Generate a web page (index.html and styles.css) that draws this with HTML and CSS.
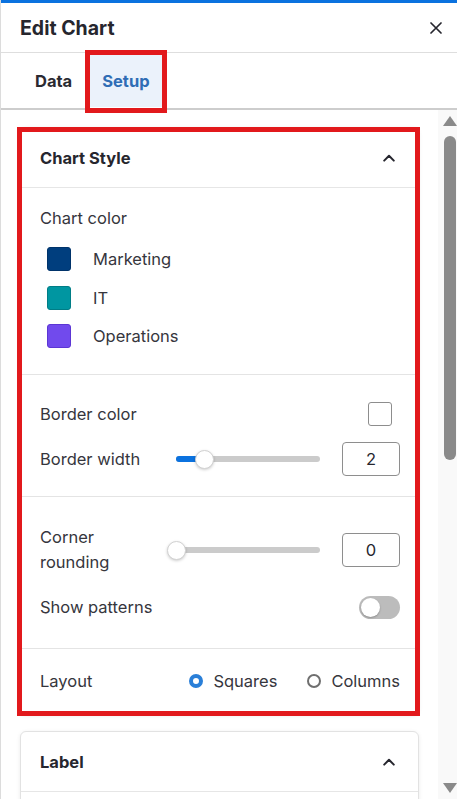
FILE: index.html
```html
<!DOCTYPE html>
<html lang="en">
<head>
<meta charset="utf-8">
<title>Edit Chart</title>
<link rel="stylesheet" href="styles.css">
</head>
<body>
<div class="panel">
  <div class="topbar"></div>
  <header class="head">
    <h1 class="title">Edit Chart</h1>
    <button class="close" aria-label="Close">
      <svg width="12" height="12" viewBox="0 0 12 12"><path d="M1 1L11 11M11 1L1 11" stroke="#26262e" stroke-width="1.7" stroke-linecap="round" fill="none"/></svg>
    </button>
  </header>
  <nav class="tabs">
    <span class="tab">Data</span>
    <span class="tab active annot-tab">Setup</span>
  </nav>
  <div class="body">
    <div class="scroll">
      <section class="card annot-card">
        <div class="card-head">
          <span class="card-title">Chart Style</span>
          <svg class="chev" width="12" height="8" viewBox="0 0 12 8"><path d="M1.2 6.6L6 1.8L10.8 6.6" stroke="#26262e" stroke-width="2" fill="none" stroke-linecap="round" stroke-linejoin="round"/></svg>
        </div>
        <div class="sec sec-colors">
          <div class="label">Chart color</div>
          <ul class="series">
            <li class="series-row"><span class="sw sw-mkt"></span><span class="label">Marketing</span></li>
            <li class="series-row"><span class="sw sw-it"></span><span class="label">IT</span></li>
            <li class="series-row"><span class="sw sw-ops"></span><span class="label">Operations</span></li>
          </ul>
        </div>
        <div class="sec sec-border">
          <div class="row">
            <span class="label">Border color</span>
            <span class="color-box"></span>
          </div>
          <div class="slider-row">
            <span class="label">Border width</span>
            <div class="slider">
              <div class="fill" style="width:20%"></div>
              <div class="thumb" style="left:20%"></div>
            </div>
            <div class="num">2</div>
          </div>
        </div>
        <div class="sec sec-corner">
          <div class="slider-row tall">
            <span class="label">Corner<br>rounding</span>
            <div class="slider">
              <div class="fill" style="width:0%"></div>
              <div class="thumb" style="left:0%"></div>
            </div>
            <div class="num">0</div>
          </div>
          <div class="row">
            <span class="label">Show patterns</span>
            <span class="toggle"><span class="knob"></span></span>
          </div>
        </div>
        <div class="sec sec-layout">
          <div class="row">
            <span class="label">Layout</span>
            <div class="radios">
              <span class="radio-item"><span class="radio on"></span><span class="label">Squares</span></span>
              <span class="radio-item"><span class="radio"></span><span class="label">Columns</span></span>
            </div>
          </div>
        </div>
      </section>
      <section class="card">
        <div class="card-head">
          <span class="card-title">Label</span>
          <svg class="chev" width="12" height="8" viewBox="0 0 12 8"><path d="M1.2 6.6L6 1.8L10.8 6.6" stroke="#26262e" stroke-width="2" fill="none" stroke-linecap="round" stroke-linejoin="round"/></svg>
        </div>
        <div class="sec sec-empty"></div>
      </section>
    </div>
    <div class="scrollbar">
      <span class="arrow up"></span>
      <div class="sb-track"><div class="sb-thumb"></div></div>
      <span class="arrow down"></span>
    </div>
  </div>
</div>
</body>
</html>
```

FILE: styles.css
```css
* { box-sizing: border-box; }
html, body { margin: 0; padding: 0; }
body {
  width: 457px;
  height: 799px;
  overflow: hidden;
  background: #fff;
  font-family: Inter, "Noto Sans", "Liberation Sans", sans-serif;
  color: #2c2c33;
}
.panel {
  height: 799px;
  display: flex;
  flex-direction: column;
  border-left: 1px solid #dcdcdc;
}
.topbar { height: 3px; background: #0b72df; flex: none; }
.head {
  height: 50px;
  flex: none;
  display: flex;
  align-items: center;
  justify-content: space-between;
  padding: 0 15px 0 19px;
  border-bottom: 1px solid #dedede;
}
.title { margin: 0; font-size: 19.5px; font-weight: 700; color: #26262e; }
.close { border: 0; background: none; padding: 0; width: 12px; height: 12px; display: flex; }
.tabs {
  flex: none;
  height: 57px;
  display: flex;
  gap: 4px;
  padding: 1px 0 1px 21px;
  border-bottom: 2px solid #cdcdcd;
}
.tab {
  display: flex;
  align-items: center;
  padding: 0 13px;
  font-size: 16.5px;
  font-weight: 700;
  color: #2a2a31;
}
.tab.active { background: #ebf2fb; color: #2f6db5; }
.annot-tab { position: relative; }
.annot-tab::after {
  content: "";
  position: absolute;
  left: -4px; right: -4px; top: -4px; bottom: -6px;
  border: 5px solid #e2191c;
}
.body { flex: 1; min-height: 0; display: flex; }
.scroll {
  flex: 1;
  min-width: 0;
  overflow: hidden;
  padding: 17px 19px 0 19px;
  display: flex;
  flex-direction: column;
  gap: 16px;
}
.scrollbar {
  flex: none;
  width: 19px;
  background: #f9f9f9;
  display: flex;
  flex-direction: column;
  align-items: center;
  padding: 6px 0 6px 5px;
}
.arrow { width: 0; height: 0; border-left: 7px solid transparent; border-right: 7px solid transparent; flex: none; }
.arrow.up { border-bottom: 10px solid #8a8a8a; }
.arrow.down { border-top: 10px solid #8a8a8a; }
.sb-track { flex: 1; width: 100%; padding: 10px 0 0; display: flex; justify-content: center; }
.sb-thumb { width: 12px; height: 324px; border-radius: 6px; background: #8a8a8a; }
.card {
  flex: none;
  background: #fff;
  border: 1px solid #e2e2e2;
  border-radius: 6px;
  box-shadow: 0 1px 4px rgba(0,0,0,0.08);
}
.annot-card { position: relative; }
.annot-card::after {
  content: "";
  position: absolute;
  left: -4px; right: -2px; top: -1px; bottom: -2px;
  border: 5px solid #e2191c;
  pointer-events: none;
}
.card-head {
  height: 60px;
  display: flex;
  align-items: center;
  justify-content: space-between;
  padding: 0 23px 0 19px;
  border-bottom: 1px solid #e6e6e6;
}
.card-title { font-size: 16.5px; font-weight: 700; color: #26262e; }
.label { font-size: 16.5px; line-height: 24px; color: #36363d; }
.sec { padding: 0 18px 0 19px; border-bottom: 1px solid #e4e4e4; }
.sec:last-child { border-bottom: 0; }
.sec-colors { padding-top: 18px; padding-bottom: 26px; }
.series { list-style: none; margin: 17px 0 0; padding: 0 0 0 7px; display: flex; flex-direction: column; gap: 14.5px; }
.series-row { display: flex; align-items: center; gap: 22px; height: 24px; }
.sw { width: 24px; height: 24px; border-radius: 3px; flex: none; }
.sw-mkt { background: #003e7e; border: 1px solid #00336a; }
.sw-it { background: #0096a1; border: 1px solid #007d86; }
.sw-ops { background: #714aed; border: 1px solid #5c36d4; }
.sec-border { padding-top: 27px; padding-bottom: 20px; display: flex; flex-direction: column; gap: 16px; }
.row { display: flex; align-items: center; justify-content: space-between; }
.color-box { width: 24px; height: 24px; border: 1px solid #8d8d8d; border-radius: 3px; margin-right: 8px; background: #fff; }
.slider-row { display: grid; grid-template-columns: 114px 1fr 58px; column-gap: 22px; align-items: center; height: 34px; }
.slider-row.tall { height: 50px; }
.slider-row.tall .label { line-height: 25px; }
.slider { position: relative; height: 6px; border-radius: 3px; background: #cbcbcb; }
.fill { height: 6px; border-radius: 3px 0 0 3px; background: #0b72df; }
.thumb {
  position: absolute;
  top: 50%;
  width: 19px; height: 19px;
  margin: -9.5px 0 0 -9.5px;
  border-radius: 50%;
  background: #fff;
  border: 1px solid #d2d2d2;
  box-shadow: 0 1px 3px rgba(0,0,0,0.2);
}
.num {
  height: 34px;
  border: 1px solid #8e8e8e;
  border-radius: 4px;
  display: flex;
  align-items: center;
  justify-content: center;
  font-size: 16.5px;
  color: #26262e;
}
.sec-corner { padding-top: 28px; padding-bottom: 29px; display: flex; flex-direction: column; gap: 20px; }
.toggle { width: 41px; height: 23px; border-radius: 12px; background: #bcbcbc; display: flex; align-items: center; padding-left: 2px; }
.knob { width: 19px; height: 19px; border-radius: 50%; background: #fff; box-shadow: 0 1px 2px rgba(0,0,0,0.25); }
.sec-layout { padding-top: 20px; padding-bottom: 21px; }
.radios { display: flex; gap: 30px; }
.radio-item { display: flex; align-items: center; gap: 10px; }
.radio { width: 14px; height: 14px; border-radius: 50%; border: 2px solid #6f6f6f; background: #fff; flex: none; }
.radio.on { border: 4px solid #2a7fd8; }
.sec-empty { height: 40px; }
```
